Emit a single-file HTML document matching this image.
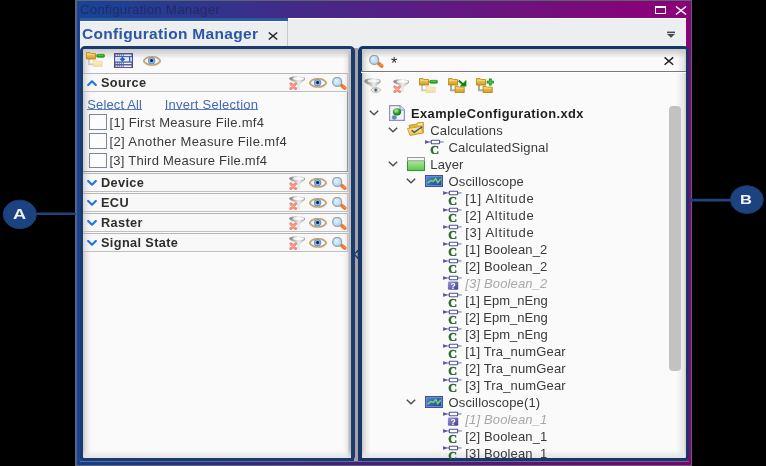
<!DOCTYPE html>
<html><head><meta charset="utf-8">
<style>
*{margin:0;padding:0;box-sizing:border-box}
html,body{width:766px;height:466px;overflow:hidden;background:#000}
body{position:relative;font-family:"Liberation Sans",sans-serif}
.a{position:absolute}
.t{position:absolute;white-space:pre;font-size:13px;line-height:17px;color:#3a3a3a;letter-spacing:0.15px}
.b{font-weight:bold;color:#2e2e2e;letter-spacing:0.1px}
.hb{font-size:12px;letter-spacing:0.35px;transform:scaleX(1.06);transform-origin:0 0}
svg{position:absolute;overflow:visible}
</style></head><body><div id="root" style="position:absolute;left:0;top:0;width:766px;height:466px;will-change:transform">


<svg width="0" height="0" style="position:absolute">
<defs>
 <linearGradient id="gFun" x1="0" y1="0" x2="1" y2="0"><stop offset="0" stop-color="#7c7c7c"/><stop offset="0.6" stop-color="#eeeeee"/><stop offset="1" stop-color="#9c9c9c"/></linearGradient>
 <linearGradient id="gFold" x1="0" y1="0" x2="0" y2="1"><stop offset="0" stop-color="#f6d66a"/><stop offset="1" stop-color="#d49a1a"/></linearGradient>
 <linearGradient id="gFoldFront" x1="0" y1="0" x2="0" y2="1"><stop offset="0" stop-color="#fff0a0"/><stop offset="1" stop-color="#eec040"/></linearGradient>
 <linearGradient id="gFoldPale" x1="0" y1="0" x2="0" y2="1"><stop offset="0" stop-color="#fbf0cc"/><stop offset="1" stop-color="#f0dca0"/></linearGradient>
 <radialGradient id="gLens" cx="0.4" cy="0.4" r="0.65"><stop offset="0" stop-color="#e4f2ff"/><stop offset="1" stop-color="#a8d2f4"/></radialGradient>
 <radialGradient id="gBall" cx="0.4" cy="0.35" r="0.7"><stop offset="0" stop-color="#b6f0a0"/><stop offset="0.6" stop-color="#22a022"/><stop offset="1" stop-color="#0a6a0a"/></radialGradient>
 <linearGradient id="gLayer" x1="0" y1="0" x2="0" y2="1"><stop offset="0" stop-color="#c4f4b4"/><stop offset="1" stop-color="#5cc84c"/></linearGradient>
 <linearGradient id="gOsc" x1="0" y1="0" x2="1" y2="1"><stop offset="0" stop-color="#5a8ad8"/><stop offset="1" stop-color="#1a3c98"/></linearGradient>
 <linearGradient id="gQ" x1="0" y1="0" x2="1" y2="1"><stop offset="0" stop-color="#9a9ad4"/><stop offset="1" stop-color="#3c3c8c"/></linearGradient>

 <symbol id="funx" viewBox="0 0 16 14">
  <path d="M0.2 2.6C0.2 -0.6 16.4 -0.6 16.4 2.6C16.4 4.6 12.2 5.8 10.8 8.4V13.2H8.4V8.4C7 5.8 0.2 4.6 0.2 2.6Z" fill="url(#gFun)"/>
  <ellipse cx="9.6" cy="2.4" rx="5.6" ry="1.5" fill="#fdfdfd" opacity="0.85"/>
  <path d="M1.8 7.8L6.6 12.6M6.6 7.8L1.8 12.6" stroke="#f28a76" stroke-width="2.9" stroke-linecap="round"/>
  <path d="M2.8 8.8L5.6 11.6M5.6 8.8L2.8 11.6" stroke="#f9ae98" stroke-width="0.9" stroke-linecap="round"/>
 </symbol>
 <symbol id="eye" viewBox="0 0 18 10">
  <clipPath id="eyeClip"><path d="M0.6 4.8C4 -0.7 14 -0.7 17.4 4.8C14 10.3 4 10.3 0.6 4.8Z"/></clipPath>
  <path d="M0.6 4.8C4 -0.7 14 -0.7 17.4 4.8C14 10.3 4 10.3 0.6 4.8Z" fill="#f8fbff" stroke="#8a78c0" stroke-width="2.2" stroke-opacity="0.35"/>
  <g clip-path="url(#eyeClip)"><circle cx="8.6" cy="4.7" r="3.6" fill="#86b8ea"/><circle cx="8.6" cy="4.7" r="3.3" fill="none" stroke="#5088c8" stroke-width="0.7"/></g>
  <circle cx="8.6" cy="4.5" r="1.5" fill="#121a2e"/>
  <path d="M0.6 4.8C4 -0.7 14 -0.7 17.4 4.8C14 10.3 4 10.3 0.6 4.8Z" fill="none" stroke="#c9a258" stroke-width="1.25"/>
 </symbol>
 <symbol id="mag" viewBox="0 0 15 13">
  <path d="M9.9 8.7L12.7 11.1" stroke="#f07028" stroke-width="3.6" stroke-linecap="round"/>
  <path d="M10.8 9.9L11.8 9M12.1 11L13 10.2" stroke="#ffb868" stroke-width="0.9"/>
  <circle cx="5.2" cy="4.9" r="4.5" fill="url(#gLens)" stroke="#98a0ac" stroke-width="1.3"/>
 </symbol>
 <symbol id="chu" viewBox="0 0 10 6"><path d="M1.2 5L5 1.3L8.8 5" stroke="#1e78e0" stroke-width="2.2" fill="none" stroke-linecap="round" stroke-linejoin="round"/></symbol>
 <symbol id="chd" viewBox="0 0 10 6"><path d="M1.2 1L5 4.7L8.8 1" stroke="#1e78e0" stroke-width="2.2" fill="none" stroke-linecap="round" stroke-linejoin="round"/></symbol>
 <symbol id="tch" viewBox="0 0 10 6"><path d="M0.8 0.8L5 4.8L9.2 0.8" stroke="#4e4e4e" stroke-width="1.5" fill="none"/></symbol>
 <symbol id="sigc" viewBox="0 0 19 15">
  <path d="M0.3 2.95H18.6" stroke="#6c6cb0" stroke-width="1"/>
  <path d="M0.2 0.9L4.4 2.95L0.2 5Z" fill="#5656a0"/>
  <rect x="6.3" y="1.25" width="8.3" height="3.5" rx="0.5" fill="#fff" stroke="#50509c" stroke-width="1.1"/>
  <text x="5.3" y="14.5" font-family="Liberation Serif" font-weight="bold" font-size="12.2" fill="#2a6a2a" stroke="#2a6a2a" stroke-width="0.45">C</text>
 </symbol>
 <symbol id="sigq" viewBox="0 0 19 15">
  <path d="M0.3 2.95H18.6" stroke="#6c6cb0" stroke-width="1"/>
  <path d="M0.2 0.9L4.4 2.95L0.2 5Z" fill="#5656a0"/>
  <rect x="6.3" y="1.25" width="8.3" height="3.5" rx="0.5" fill="#fff" stroke="#50509c" stroke-width="1.1"/>
  <rect x="4.9" y="6.4" width="10.3" height="8.4" rx="1.2" fill="url(#gQ)"/>
  <text x="7.5" y="13.6" font-family="Liberation Sans" font-weight="bold" font-size="8.5" fill="#fff">?</text>
 </symbol>
 <symbol id="osc" viewBox="0 0 18 12">
  <rect x="0.5" y="0.5" width="17" height="11" fill="url(#gOsc)" stroke="#4a4c94"/>
  <rect x="1.5" y="1.5" width="15" height="9" fill="none" stroke="#5c98dc" stroke-width="0.9"/>
  <path d="M2.6 8.2L5.6 5.6L8.3 6.4L10.7 3.6L12.8 7.6L15.6 4" stroke="#76d65c" stroke-width="1.5" fill="none"/>
 </symbol>
 <symbol id="layer" viewBox="0 0 18 14">
  <rect x="0.5" y="0.5" width="17" height="13" fill="url(#gLayer)" stroke="#2a9a2a"/>
  <rect x="0.5" y="0.5" width="17" height="3.3" fill="#f6f6f6" stroke="#9a9a9a"/>
 </symbol>
 <symbol id="xdx" viewBox="0 0 16 16">
  <path d="M0.6 0.6H11L15.4 5V15.4H0.6Z" fill="#f0f4fa" stroke="#8a94b8" stroke-width="1.2"/>
  <path d="M11 0.6V5H15.4" fill="#dde4f2" stroke="#8a94b8" stroke-width="1"/>
  <ellipse cx="5.3" cy="12.4" rx="2.3" ry="2" fill="#5a88d8" stroke="#8a80c8" stroke-width="0.6"/>
  <ellipse cx="8" cy="6.8" rx="4.2" ry="3.6" fill="url(#gBall)"/>
 </symbol>
 <symbol id="calc" viewBox="0 0 17 14">
  <path d="M2.2 3.2L9.5 2.2L10.5 0.8L16.4 0.4L16.2 10.8L3 12.5Z" fill="#e6b42e" stroke="#b8881a" stroke-width="0.8"/>
  <path d="M10.8 1.4L15.6 1.1L15.5 3.2L10.6 3.6Z" fill="#fff4c0" opacity="0.8"/>
  <path d="M0.5 6.6L13.6 4.6L16.4 10.9L3.1 13.5Z" fill="url(#gFoldFront)" stroke="#c0901e" stroke-width="0.8"/>
  <path d="M4.6 8.2L7.2 10.4L15.2 4.8" stroke="#3c50a0" stroke-width="1.4" fill="none"/>
 </symbol>
 <symbol id="fcol" viewBox="0 0 19 15">
  <path d="M3 7V12.3H7.1" stroke="#c8c8c8" stroke-width="1.8" fill="none"/><path d="M0.4 0.6H4.2L5.2 1.6H9.6V7H0.4Z" fill="url(#gFold)" stroke="#b88418" stroke-width="0.9"/><path d="M1.2 2.4H8.8" stroke="#fde890" stroke-width="0.7" opacity="0.8"/><path d="M7.1 8.3H10.4L11.4 9.2H16.2V14.6H7.1Z" fill="url(#gFoldPale)" stroke="#ead8a4" stroke-width="0.8"/>
  <rect x="10.6" y="2.3" width="8" height="3" rx="1.3" fill="#22a622" stroke="#168a16" stroke-width="0.6"/>
  <path d="M11.8 3.3H17.4" stroke="#7ad87a" stroke-width="0.6"/>
 </symbol>
 <symbol id="fmov" viewBox="0 0 19 15">
  <path d="M3 7V12.3H7.1" stroke="#8e8e8e" stroke-width="1.8" fill="none"/><path d="M3 7V12.3H7.1" stroke="#d8d8d8" stroke-width="0.5" fill="none"/><path d="M0.4 0.6H4.2L5.2 1.6H9.6V7H0.4Z" fill="url(#gFold)" stroke="#b88418" stroke-width="0.9"/><path d="M1.2 2.4H8.8" stroke="#fde890" stroke-width="0.7" opacity="0.8"/><path d="M7.1 8.3H10.4L11.4 9.2H16.2V14.6H7.1Z" fill="url(#gFold)" stroke="#b88418" stroke-width="0.9"/><path d="M7.9 10.1H15.4" stroke="#fde890" stroke-width="0.7" opacity="0.8"/>
  <path d="M10.8 2.4L15 6.4" stroke="#0e8a0e" stroke-width="2.1"/>
  <path d="M18.4 1.8V8.6H11.6Z" fill="#0e8a0e"/>
 </symbol>
 <symbol id="fadd" viewBox="0 0 19 15">
  <path d="M3 7V12.3H7.1" stroke="#8e8e8e" stroke-width="1.8" fill="none"/><path d="M3 7V12.3H7.1" stroke="#d8d8d8" stroke-width="0.5" fill="none"/><path d="M0.4 0.6H4.2L5.2 1.6H9.6V7H0.4Z" fill="url(#gFold)" stroke="#b88418" stroke-width="0.9"/><path d="M1.2 2.4H8.8" stroke="#fde890" stroke-width="0.7" opacity="0.8"/><path d="M7.1 8.3H10.4L11.4 9.2H16.2V14.6H7.1Z" fill="url(#gFold)" stroke="#b88418" stroke-width="0.9"/><path d="M7.9 10.1H15.4" stroke="#fde890" stroke-width="0.7" opacity="0.8"/>
  <path d="M14.3 0.6V7.6M10.8 4.1H17.8" stroke="#138813" stroke-width="2.8"/>
  <path d="M14.3 1.4V6.8M11.6 4.1H17" stroke="#44cc44" stroke-width="1.3"/>
 </symbol>
 <symbol id="funeye" viewBox="0 0 17 15">
  <path d="M0.3 3.2C0.3 -0.6 16.7 -0.6 16.7 3.2C16.7 5.6 12.2 7 11.2 10.2H8.6C7.2 7 0.3 5.6 0.3 3.2Z" fill="url(#gFun)"/>
  <ellipse cx="9.6" cy="2.9" rx="6" ry="1.7" fill="#fdfdfd" opacity="0.8"/>
  <path d="M6.8 12C9 8.8 14.6 8.8 16.8 12C14.6 15.2 9 15.2 6.8 12Z" fill="#f6f9ff" stroke="#cfae6a" stroke-width="0.9"/>
  <circle cx="11.8" cy="12" r="2.1" fill="#78ace4"/>
  <circle cx="11.8" cy="11.9" r="0.9" fill="#2a3a5a"/>
 </symbol>
 <symbol id="table" viewBox="0 0 19 15">
  <rect x="0.5" y="0.5" width="18" height="14.3" fill="#5c5c9c" stroke="#4a4a8c" stroke-width="1"/>
  <path d="M1.6 2.2H10" stroke="#e4e4f0" stroke-width="1.4" stroke-dasharray="1.3 0.7"/>
  <path d="M10 2.2H17.4" stroke="#f4f4fa" stroke-width="1.4"/>
  <path d="M1.6 10.4H10M1.6 13.3H10" stroke="#e4e4f0" stroke-width="1.4" stroke-dasharray="1.3 0.7"/>
  <path d="M10 10.4H17.4M10 13.3H17.4" stroke="#f4f4fa" stroke-width="1.4"/>
  <rect x="1.1" y="4.1" width="16.8" height="4.3" fill="#dcf0fc"/>
  <path d="M2.5 6.25H8" stroke="#a8d0f4" stroke-width="1.2"/>
  <path d="M5.8 6.25L8.4 3.8L11.4 6.25L8.4 8.7Z" fill="#1a66d4"/>
  <rect x="15" y="3.8" width="1.3" height="5" fill="#1a66d4"/>
 </symbol>
</defs></svg>

<!-- window frame -->
<div class="a" style="left:75px;top:0;width:616.6px;height:466px;background:#5c6470"></div>
<div class="a" style="left:76.5px;top:1px;width:614px;height:464px;background:linear-gradient(90deg,#16449a 0%,#37318a 26%,#482785 40%,#5c1c82 57%,#72107c 76%,#88037a 92%,#8a0279 100%)"></div>
<div class="t" style="left:80.3px;top:2px;font-size:12.5px;line-height:17px;color:#202c62;letter-spacing:0.2px;transform:scaleX(1.065);transform-origin:0 0">Configuration Manager</div>
<!-- maximize / close -->
<div class="a" style="left:655px;top:6px;width:11px;height:8px;border:1.5px solid #fff;border-top-width:2px"></div>
<svg style="left:675px;top:6px" width="12" height="9" viewBox="0 0 12 9"><path d="M1 0.5L11 8.5M11 0.5L1 8.5" stroke="#fff" stroke-width="1.6"/></svg>

<!-- tab strip -->
<div class="a" style="left:80px;top:18px;width:606.4px;height:34px;background:#eceef0;border-top:1px solid #fbfbfb"></div>
<div class="a" style="left:80px;top:18px;width:208px;height:28px;background:#eceef0;border-right:1px solid #c8c8c8"></div>
<div class="a" style="left:80px;top:18px;width:208px;height:3px;background:#2a5aa0"></div>
<div class="a" style="left:80px;top:21px;width:207px;height:1px;background:#fafafa"></div>
<div class="t b" style="left:82.4px;top:25px;font-size:14px;line-height:18px;color:#2c56a6;letter-spacing:0.3px;transform:scaleX(1.105);transform-origin:0 0">Configuration Manager</div>
<svg style="left:268px;top:32px" width="10" height="8" viewBox="0 0 10 8"><path d="M0.8 0.5L9.2 7.5M9.2 0.5L0.8 7.5" stroke="#262626" stroke-width="1.6"/></svg>
<svg style="left:667px;top:31px" width="9" height="7" viewBox="0 0 9 7"><rect x="0" y="0.6" width="8" height="1.5" fill="#4a4a4a"/><path d="M0 2.9H8L4 6.8Z" fill="#4a4a4a"/></svg>

<!-- splitter gap -->
<div class="a" style="left:354px;top:48px;width:4px;height:414px;background:#a4a4a4"></div>



<!-- LEFT PANEL -->
<div class="a" style="left:80px;top:46px;width:275px;height:415.3px;border:3px solid #1b3a6e;border-right-width:4px;border-radius:5px;background:#fafafa;box-shadow:inset 0 0 0 0 #000;overflow:hidden">
  <div class="a" style="left:0;top:0;width:100%;height:100%;background:linear-gradient(90deg,#c6c6c6 0px,#e2e2e2 3px,#f2f2f2 6px,#fafafa 9px,#fafafa calc(100% - 8px),#e8e8e8 calc(100% - 3px),#b4b4b4 calc(100% - 2px),#c4c4c4 100%)"></div>
  <div class="a" style="left:0;top:0;width:100%;height:10px;background:linear-gradient(180deg,#c8c8c8,rgba(250,250,250,0))"></div>
  <div class="a" style="left:0;bottom:0;width:100%;height:8px;background:linear-gradient(0deg,#e4e4e4,rgba(250,250,250,0))"></div>
</div>

<!-- RIGHT PANEL -->
<div class="a" style="left:357.5px;top:46px;width:331.2px;height:415.3px;border:3.5px solid #17376b;border-top-width:3px;border-left-width:4px;border-radius:5px;background:#fafafa;overflow:hidden">
  <div class="a" style="left:0;top:0;width:100%;height:100%;background:linear-gradient(90deg,#c6c6c6 0px,#e2e2e2 3px,#f2f2f2 6px,#fafafa 9px,#fafafa calc(100% - 10px),#e6e6e6 calc(100% - 2px),#c8c8c8 100%)"></div>
  <div class="a" style="left:0;top:0;width:100%;height:9px;background:linear-gradient(180deg,#c8c8c8,rgba(250,250,250,0))"></div>
  <div class="a" style="left:0;bottom:0;width:100%;height:8px;background:linear-gradient(0deg,#e4e4e4,rgba(250,250,250,0))"></div>
</div>

<div class="a" style="left:80px;top:461.4px;width:608.6px;height:0.9px;background:#5c7294"></div>
<svg style="left:353px;top:249px" width="6" height="11" viewBox="0 0 6 11"><path d="M5.3 1L1.4 5.4L5.3 9.8Z" stroke="#1b3a6e" stroke-width="1.3" fill="#a8a8a8" stroke-linejoin="round"/></svg>
<div class="a" style="left:77px;top:462px;width:613px;height:3px;background:rgba(0,0,10,0.09)"></div>
<!-- CONTENT -->
<svg style="left:85.5px;top:52px" width="19" height="15"><use href="#fcol"/></svg>
<svg style="left:114px;top:52.8px" width="19" height="15"><use href="#table"/></svg>
<svg style="left:143.4px;top:55.6px" width="18" height="10"><use href="#eye"/></svg>
<div class="a" style="left:83px;top:73px;width:265px;height:19px;border:1px solid #c0c0c0;border-top-color:#b6b6b6;border-left:none;background:rgba(245,245,245,0.25)"></div><svg style="left:86.5px;top:79.7px" width="10" height="6"><use href="#chu"/></svg><div class="t b hb" style="left:100.6px;top:74.9px">Source</div><svg style="left:289px;top:76px" width="16" height="14"><use href="#funx"/></svg><svg style="left:308.8px;top:78.3px" width="18" height="10"><use href="#eye"/></svg><svg style="left:331.5px;top:77.4px" width="15" height="13"><use href="#mag"/></svg>
<div class="a" style="left:83px;top:92px;width:265px;height:80px;border:1px solid #8c939c;border-left:none;border-top:none;background:transparent"></div>
<div class="t" style="left:87.2px;top:95.6px;color:#4468b4">Select All</div><div class="a" style="left:87px;top:109px;width:55px;height:1px;background:#5a7cc0"></div>
<div class="t" style="left:164.7px;top:95.6px;color:#4468b4;letter-spacing:0.25px">Invert Selection</div><div class="a" style="left:164.5px;top:109px;width:93.5px;height:1px;background:#5a7cc0"></div>
<div class="a" style="left:88.6px;top:114.2px;width:18.3px;height:15.6px;border:1.2px solid #7a8796;background:#fcfcfc"></div>
<div class="t" style="left:109.5px;top:113.7px;letter-spacing:0.28px">[1] First Measure File.mf4</div>
<div class="a" style="left:88.6px;top:133.4px;width:18.3px;height:15.6px;border:1.2px solid #7a8796;background:#fcfcfc"></div>
<div class="t" style="left:109.5px;top:132.9px;letter-spacing:0.38px">[2] Another Measure File.mf4</div>
<div class="a" style="left:88.6px;top:152.6px;width:18.3px;height:15.6px;border:1.2px solid #7a8796;background:#fcfcfc"></div>
<div class="t" style="left:109.5px;top:152.1px;letter-spacing:0.24px">[3] Third Measure File.mf4</div>
<div class="a" style="left:83px;top:173px;width:265px;height:19px;border:1px solid #c0c0c0;border-top-color:#b6b6b6;border-left:none;background:rgba(245,245,245,0.25)"></div><svg style="left:86.5px;top:179.5px" width="10" height="6"><use href="#chd"/></svg><div class="t b hb" style="left:100.6px;top:174.9px">Device</div><svg style="left:289px;top:176px" width="16" height="14"><use href="#funx"/></svg><svg style="left:308.8px;top:178.3px" width="18" height="10"><use href="#eye"/></svg><svg style="left:331.5px;top:177.4px" width="15" height="13"><use href="#mag"/></svg>
<div class="a" style="left:83px;top:193px;width:265px;height:19px;border:1px solid #c0c0c0;border-top-color:#b6b6b6;border-left:none;background:rgba(245,245,245,0.25)"></div><svg style="left:86.5px;top:199.5px" width="10" height="6"><use href="#chd"/></svg><div class="t b hb" style="left:100.6px;top:194.9px">ECU</div><svg style="left:289px;top:196px" width="16" height="14"><use href="#funx"/></svg><svg style="left:308.8px;top:198.3px" width="18" height="10"><use href="#eye"/></svg><svg style="left:331.5px;top:197.4px" width="15" height="13"><use href="#mag"/></svg>
<div class="a" style="left:83px;top:213px;width:265px;height:19px;border:1px solid #c0c0c0;border-top-color:#b6b6b6;border-left:none;background:rgba(245,245,245,0.25)"></div><svg style="left:86.5px;top:219.5px" width="10" height="6"><use href="#chd"/></svg><div class="t b hb" style="left:100.6px;top:214.9px">Raster</div><svg style="left:289px;top:216px" width="16" height="14"><use href="#funx"/></svg><svg style="left:308.8px;top:218.3px" width="18" height="10"><use href="#eye"/></svg><svg style="left:331.5px;top:217.4px" width="15" height="13"><use href="#mag"/></svg>
<div class="a" style="left:83px;top:233px;width:265px;height:19px;border:1px solid #c0c0c0;border-top-color:#b6b6b6;border-left:none;background:rgba(245,245,245,0.25)"></div><svg style="left:86.5px;top:239.5px" width="10" height="6"><use href="#chd"/></svg><div class="t b hb" style="left:100.6px;top:234.9px">Signal State</div><svg style="left:289px;top:236px" width="16" height="14"><use href="#funx"/></svg><svg style="left:308.8px;top:238.3px" width="18" height="10"><use href="#eye"/></svg><svg style="left:331.5px;top:237.4px" width="15" height="13"><use href="#mag"/></svg>
<svg style="left:369px;top:54.5px" width="15" height="13"><use href="#mag"/></svg>
<div class="t" style="left:391px;top:55px;color:#222;font-size:16px">*</div>
<svg style="left:664px;top:57px" width="10" height="8" viewBox="0 0 10 8"><path d="M0.6 0.4L9.2 7.8M9.2 0.4L0.6 7.8" stroke="#222" stroke-width="1.5"/></svg>
<div class="a" style="left:361px;top:70.5px;width:324.5px;height:1.4px;background:#737983"></div>
<div class="a" style="left:361px;top:71.9px;width:324.5px;height:1px;background:#ffffff"></div>
<svg style="left:364px;top:78.3px" width="17" height="15"><use href="#funeye"/></svg>
<svg style="left:392.5px;top:79px" width="16" height="14"><use href="#funx"/></svg>
<svg style="left:419.2px;top:77.8px" width="19" height="15"><use href="#fcol"/></svg>
<svg style="left:447.6px;top:77.8px" width="19" height="15"><use href="#fmov"/></svg>
<svg style="left:476px;top:77.8px" width="19" height="15"><use href="#fadd"/></svg>
<div class="a" style="left:669px;top:106px;width:12px;height:264.6px;background:#c2c2c2;border-radius:4px"></div>
<div class="a" style="left:361px;top:96px;width:305px;height:362.5px;overflow:hidden"><svg style="left:8.3px;top:13.6px" width="10" height="6"><use href="#tch"/></svg><svg style="left:28px;top:8.799999999999997px" width="16" height="16"><use href="#xdx"/></svg><div class="t b hb" style="left:50.3px;top:10.2px;color:#1e1e1e;letter-spacing:0.4px;transform:scaleX(1.07)">ExampleConfiguration.xdx</div><svg style="left:26.55px;top:30.6px" width="10" height="6"><use href="#tch"/></svg><svg style="left:46.39999999999998px;top:26.400000000000006px" width="17" height="14"><use href="#calc"/></svg><div class="t" style="left:69.25px;top:25.8px;">Calculations</div><svg style="left:63.9px;top:42.5px" width="19" height="15"><use href="#sigc"/></svg><div class="t" style="left:87.5px;top:42.8px;">CalculatedSignal</div><svg style="left:26.55px;top:64.6px" width="10" height="6"><use href="#tch"/></svg><svg style="left:45.80000000000001px;top:60.5px" width="18" height="14"><use href="#layer"/></svg><div class="t" style="left:69.25px;top:59.8px;">Layer</div><svg style="left:44.8px;top:81.6px" width="10" height="6"><use href="#tch"/></svg><svg style="left:64.2px;top:79.0px" width="18" height="12"><use href="#osc"/></svg><div class="t" style="left:87.5px;top:76.8px;">Oscilloscope</div><svg style="left:82.15px;top:93.5px" width="19" height="15"><use href="#sigc"/></svg><div class="t" style="left:104.3px;top:93.8px;letter-spacing:0.7px;">[1] Altitude</div><svg style="left:82.15px;top:110.5px" width="19" height="15"><use href="#sigc"/></svg><div class="t" style="left:104.3px;top:110.8px;letter-spacing:0.7px;">[2] Altitude</div><svg style="left:82.15px;top:127.5px" width="19" height="15"><use href="#sigc"/></svg><div class="t" style="left:104.3px;top:127.8px;letter-spacing:0.7px;">[3] Altitude</div><svg style="left:82.15px;top:144.5px" width="19" height="15"><use href="#sigc"/></svg><div class="t" style="left:104.3px;top:144.8px;">[1] Boolean_2</div><svg style="left:82.15px;top:161.5px" width="19" height="15"><use href="#sigc"/></svg><div class="t" style="left:104.3px;top:161.8px;">[2] Boolean_2</div><svg style="left:82.15px;top:178.5px" width="19" height="15"><use href="#sigq"/></svg><div class="t" style="left:104.3px;top:178.8px;color:#a8a8a8;font-style:italic;">[3] Boolean_2</div><svg style="left:82.15px;top:195.5px" width="19" height="15"><use href="#sigc"/></svg><div class="t" style="left:104.3px;top:195.8px;letter-spacing:0px;">[1] Epm_nEng</div><svg style="left:82.15px;top:212.5px" width="19" height="15"><use href="#sigc"/></svg><div class="t" style="left:104.3px;top:212.8px;letter-spacing:0px;">[2] Epm_nEng</div><svg style="left:82.15px;top:229.5px" width="19" height="15"><use href="#sigc"/></svg><div class="t" style="left:104.3px;top:229.8px;letter-spacing:0px;">[3] Epm_nEng</div><svg style="left:82.15px;top:246.5px" width="19" height="15"><use href="#sigc"/></svg><div class="t" style="left:104.3px;top:246.8px;">[1] Tra_numGear</div><svg style="left:82.15px;top:263.5px" width="19" height="15"><use href="#sigc"/></svg><div class="t" style="left:104.3px;top:263.8px;">[2] Tra_numGear</div><svg style="left:82.15px;top:280.5px" width="19" height="15"><use href="#sigc"/></svg><div class="t" style="left:104.3px;top:280.8px;">[3] Tra_numGear</div><svg style="left:44.8px;top:302.6px" width="10" height="6"><use href="#tch"/></svg><svg style="left:64.2px;top:300.0px" width="18" height="12"><use href="#osc"/></svg><div class="t" style="left:87.5px;top:297.8px;">Oscilloscope(1)</div><svg style="left:82.15px;top:314.5px" width="19" height="15"><use href="#sigq"/></svg><div class="t" style="left:104.3px;top:314.8px;color:#a8a8a8;font-style:italic;">[1] Boolean_1</div><svg style="left:82.15px;top:331.5px" width="19" height="15"><use href="#sigc"/></svg><div class="t" style="left:104.3px;top:331.8px;">[2] Boolean_1</div><svg style="left:82.15px;top:348.5px" width="19" height="15"><use href="#sigc"/></svg><div class="t" style="left:104.3px;top:348.8px;">[3] Boolean_1</div></div>
<!-- callouts -->
<svg style="left:0;top:0" width="766" height="466" viewBox="0 0 766 466">
  <line x1="36" y1="213.8" x2="76" y2="213.8" stroke="#1e4480" stroke-width="2.6"/>
  <ellipse cx="19.8" cy="214.4" rx="16.6" ry="14.2" fill="#1d4280" stroke="#1a3c74" stroke-width="1"/>
  <line x1="690" y1="200.1" x2="731" y2="200.1" stroke="#1e4480" stroke-width="2.6"/>
  <ellipse cx="746.9" cy="199.6" rx="16.4" ry="13.9" fill="#1d4280" stroke="#1a3c74" stroke-width="1"/>
</svg>
<div class="t b" style="left:12.9px;top:205.3px;font-size:14px;line-height:18px;color:#f0f2f6;letter-spacing:0;transform:scaleX(1.3);transform-origin:0 0">A</div>
<div class="t b" style="left:739.6px;top:191.3px;font-size:13.5px;line-height:18px;color:#f0f2f6;letter-spacing:0;transform:scaleX(1.22);transform-origin:0 0">B</div>

</div></body></html>
